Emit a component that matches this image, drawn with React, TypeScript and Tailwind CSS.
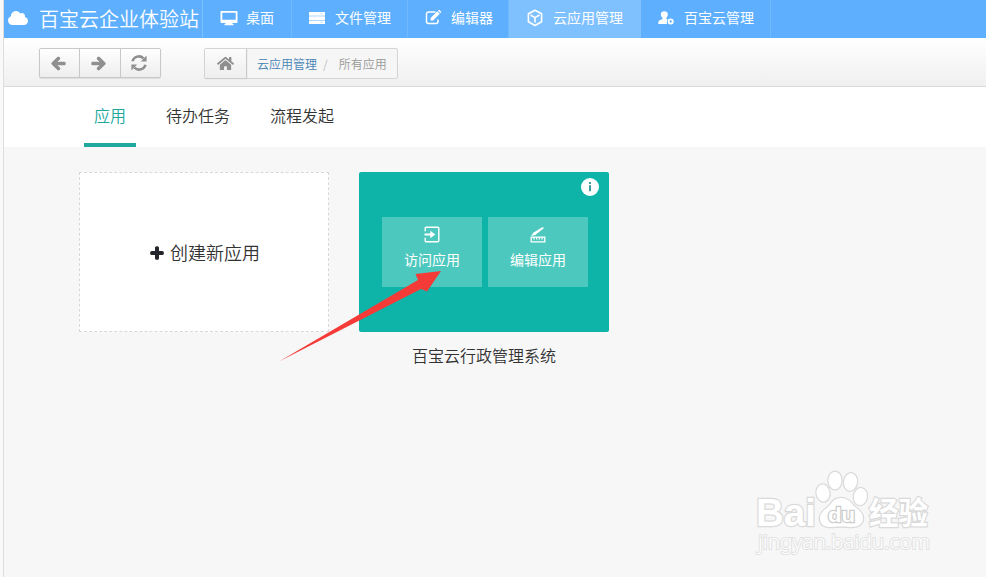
import type { ReactNode } from 'react';
import { FaArrowLeft, FaArrowRight, FaCloud, FaHome, FaPlus } from 'react-icons/fa';

interface NavItem {
  label: string;
  icon: ReactNode;
  cls: string;
  active?: boolean;
}

function DesktopIcon() {
  return (
    <svg width="18" height="16" viewBox="0 0 18 16" fill="currentColor">
      <path fillRule="evenodd" d="M1.5 1h15a1 1 0 0 1 1 1v10a1 1 0 0 1-1 1h-4v1h1v1.2h-9V14h1v-1h-4a1 1 0 0 1-1-1V2a1 1 0 0 1 1-1zM2.3 2.8v7h13.4v-7z" />
    </svg>
  );
}

function FilesIcon() {
  return (
    <svg width="16" height="14" viewBox="0 0 16 14">
      <g fill="currentColor">
        <rect y="1" width="16" height="3.7" rx=".5" />
        <rect y="5.2" width="16" height="3.7" rx=".5" />
        <rect y="9.4" width="16" height="3.7" rx=".5" />
      </g>
      <path d="M11 2.8h3M5 7h1M11 11.2h3" stroke="#b5dcff" strokeWidth=".6" />
    </svg>
  );
}

function EditIcon() {
  return (
    <svg width="17" height="15" viewBox="0 0 17 15">
      <path d="M10.500 2H3.500a2 2 0 0 0-2 2v7.500a2 2 0 0 0 2 2H11a2 2 0 0 0 2-2V9.500" fill="none" stroke="currentColor" strokeWidth="1.500" />
      <path d="M5.600 7.900 12.300 1.200 14.800 3.700 8.100 10.400H5.600zM12.900.600l.6-.5q.5-.3 1 0l1.500 1.500q.3.500 0 1l-.6.500z" fill="currentColor" />
    </svg>
  );
}

function CubeIcon() {
  return (
    <svg width="16" height="18" viewBox="0 0 16 18" fill="none" stroke="currentColor" strokeWidth="1.6" strokeLinejoin="round">
      <path d="M8 1.3 14.6 4.8v8L8 16.5 1.4 12.8v-8z" />
      <path d="M3.5 6 8 8.6 12.5 6M8 8.6v5" />
    </svg>
  );
}

function UserCogIcon() {
  return (
    <svg width="16" height="14" viewBox="0 0 16 14" fill="currentColor">
      <path d="M2.8 3.6C2.8 1.4 4.3.3 6.3.3s3.500 1.100 3.500 3.300c0 1.600-.8 2.600-1.500 3.300v.900l1.400.700c-.900.800-1.100 2.700-.7 4.400H.3c0-2.800.4-3.400 1.900-4l2.400-1V7C3.600 6.300 2.800 5.200 2.800 3.600z" />
      <circle cx="12.700" cy="10.500" r="2.100" fill="none" stroke="currentColor" strokeWidth="1.900" />
    </svg>
  );
}

function RefreshIcon() {
  return (
    <svg width="18" height="18" viewBox="0 0 18 18">
      <path d="M2.5 7.3A6.6 6.600 0 0 1 13.5 4.300M15.500 10.700A6.600 6.600 0 0 1 4.500 13.700" fill="none" stroke="currentColor" strokeWidth="2.500" />
      <path d="M16.600 1.600v5.800h-5.800zM1.400 16.400v-5.800h5.800z" fill="currentColor" />
    </svg>
  );
}

function EnterIcon() {
  return (
    <svg width="16" height="18" viewBox="0 0 16 18">
      <path d="M1.200 5.200V2.200a1 1 0 0 1 1-1h11.600a1 1 0 0 1 1 1v12.600a1 1 0 0 1-1 1H2.200a1 1 0 0 1-1-1v-3" fill="none" stroke="currentColor" strokeWidth="1.400" />
      <path d="M.5 7.400h5.800V4.800l5 3.700-5 3.700V9.600H.5z" fill="currentColor" />
    </svg>
  );
}

function DesignIcon() {
  return (
    <svg width="16" height="18" viewBox="0 0 16 18">
      <path d="M1.200 10 3.200 6.800 12.300 1.300q1.500-.3 1.500 1L5.300 9z" fill="currentColor" />
      <path d="M1.200 11.200h13.600v4.600H1.200zM4 11.500v2M6.700 11.500v2M9.400 11.500v2M12.100 11.500v2" fill="none" stroke="currentColor" strokeWidth="1.300" />
    </svg>
  );
}

const nav: NavItem[] = [
  { label: '桌面', icon: <DesktopIcon />, cls: 'w-[89px] pl-[17px]' },
  { label: '文件管理', icon: <FilesIcon />, cls: 'w-[116px] pl-[17px]' },
  { label: '编辑器', icon: <EditIcon />, cls: 'w-[101px] pl-[17px]' },
  { label: '云应用管理', icon: <CubeIcon />, cls: 'w-[132px] pl-[18px]', active: true },
  { label: '百宝云管理', icon: <UserCogIcon />, cls: 'w-[130px] pl-[17px]' },
];

const tabs = ['应用', '待办任务', '流程发起'];

function Header() {
  return (
    <header className="flex h-[38px] bg-[#5eb0ff] text-white">
      <div className="flex w-[199px] items-center gap-[11px] border-r border-[#7abfff] pb-0.5 pl-1">
        <FaCloud size={20} className="shrink-0" />
        <h1 className="whitespace-nowrap pt-px text-[20px] font-[350] leading-[36px]">百宝云企业体验站</h1>
      </div>
      {nav.map((n) => (
        <a
          key={n.label}
          className={`flex shrink-0 items-center border-r pb-[3px] font-normal ${n.cls} ${n.active ? 'border-[#7fc0ff] bg-[#7fc0ff]' : 'border-[#6fb9ff]'}`}
        >
          <span className="flex w-[26px] shrink-0 items-center">{n.icon}</span>
          <span className="whitespace-nowrap text-[14px]">{n.label}</span>
        </a>
      ))}
    </header>
  );
}

function Toolbar() {
  const btn = 'flex h-full items-center justify-center border-r border-[#c8c8c8]';
  return (
    <div className="flex h-[49px] border-b border-[#d8d8d8] bg-gradient-to-b from-white to-[#f0f0f0] pl-[35px] pt-[10px] text-[#8f8f8f]">
      <div className="flex h-[30px] w-[122px] rounded-[2px] border border-[#c8c8c8] bg-gradient-to-b from-white to-[#eee] shadow-[0_1px_1px_#ddd]">
        <button className={`${btn} w-10 pr-0.5`}><FaArrowLeft size={15} strokeWidth={40} className="overflow-visible" /></button>
        <button className={`${btn} w-[41px] pr-1`}><FaArrowRight size={15} strokeWidth={40} className="overflow-visible" /></button>
        <button className="flex flex-1 items-center justify-center pr-1"><RefreshIcon /></button>
      </div>
      <nav className="ml-[43px] flex h-[31px] w-[194px] items-center rounded-[2px] border border-[#d4d4d4] bg-[#f6f6f6] text-[12px]">
        <span className={`${btn} w-[42px] bg-gradient-to-b from-[#fcfcfc] to-[#eee] shadow-[0_1px_1px_#ccc]`}><FaHome size={17} /></span>
        <a className="ml-[10px] text-[#4582b4]">云应用管理</a>
        <span className="ml-1.5 text-[#bbb]">/</span>
        <span className="ml-[11px] text-[#999]">所有应用</span>
      </nav>
    </div>
  );
}

function AppAction({ icon, label }: { icon: ReactNode; label: string }) {
  return (
    <button className="flex h-[70px] w-[100px] flex-col items-center bg-[#4dc8be] pt-[9px] text-white">
      {icon}
      <span className="mt-[5px] text-[14px] font-normal leading-[21px]">{label}</span>
    </button>
  );
}

function Watermark() {
  return (
    <svg className="absolute left-[747px] top-[465px]" width="190" height="95" fill="#fff" stroke="#dadada" strokeWidth="2.500" style={{ paintOrder: 'stroke' }}>
      <text x="6" y="61" fontSize="39" fontWeight="700" textLength="60" lengthAdjust="spacingAndGlyphs" fontFamily="Liberation Sans, sans-serif">Bai</text>
      <ellipse cx="73" cy="28" rx="6.500" ry="8.500" transform="rotate(-8 73 28)" />
      <ellipse cx="85" cy="15.500" rx="6.500" ry="8.800" />
      <ellipse cx="100.500" cy="17" rx="6.500" ry="8.800" transform="rotate(8 101 17)" />
      <ellipse cx="110.500" cy="31.500" rx="6.500" ry="8.500" transform="rotate(8 110 31)" />
      <path d="M91 33c-6 0-8 3-11 7-4 4-10 7-10 13 0 7 5 9 10 9 4 0 7-.500 11-.500s7 .500 11 .500c6 0 11-3 11-9 0-6-6-9-10-13-3-4-6-7-12-7z" />
      <text x="78" y="57" fontSize="21" fontWeight="700" textLength="27" lengthAdjust="spacingAndGlyphs" stroke="#cdcdcd" fontFamily="Liberation Sans, sans-serif">du</text>
      <text x="119" y="59" fontSize="31" fontWeight="700" textLength="59" lengthAdjust="spacingAndGlyphs" fontFamily="Noto Sans CJK SC, sans-serif">经验</text>
      <text x="8" y="84" fontSize="20" textLength="172" lengthAdjust="spacingAndGlyphs" stroke="#e2e2e2" strokeWidth="2" fontFamily="Noto Sans, sans-serif">jingyan.baidu.com</text>
    </svg>
  );
}

export default function App() {
  return (
    <div className="relative h-[577px] w-[986px] overflow-hidden border-l-[3px] border-[#f9f9f9] bg-[#f7f7f7] font-['Noto_Sans_CJK_SC',sans-serif] font-[350] text-[#333]">
      <div className="h-full border-l border-[#ddd]">
        <Header />
        <Toolbar />
        <div className="flex h-[60px] bg-white pl-20">
          {tabs.map((t, i) => (
            <a
              key={t}
              className={`mr-5 h-full border-b-4 px-[10px] pt-4 text-[16px] leading-6 ${i === 0 ? 'border-[#20a89e] text-[#20a89e]' : 'border-transparent'}`}
            >
              {t}
            </a>
          ))}
        </div>
        <main className="flex gap-[30px] pl-[75px] pt-[25px]">
          <button className="flex h-[160px] w-[250px] items-center justify-center gap-1.5 border border-dashed border-[#d8d8d8] bg-white pl-0.5 text-[18px]">
            <FaPlus size={14} strokeWidth={50} className="mt-0.5 overflow-visible text-[#25252d]" />
            创建新应用
          </button>
          <div className="w-[250px]">
            <div className="relative flex h-[160px] justify-center gap-1.5 rounded-[2px] bg-[#0fb4a9] pl-[2px] pt-[45px]">
              <AppAction icon={<EnterIcon />} label="访问应用" />
              <AppAction icon={<DesignIcon />} label="编辑应用" />
              <svg className="absolute right-[10px] top-[6px]" width="18" height="18" viewBox="0 0 18 18">
                <circle cx="9" cy="9" r="9" fill="#fff" />
                <path d="M9 4v2M9 7.300v6" stroke="#2d8f91" strokeWidth="1.800" />
              </svg>
            </div>
            <p className="mt-[11px] text-center text-[16px] leading-6">百宝云行政管理系统</p>
          </div>
        </main>
      </div>
      {/* pointer to the open-app button */}
      <svg className="absolute left-[270px] top-[265px]" width="172" height="100">
        <path d="M6 96.500 145 15 142.500 9 168 6 154 26.500 148 24z" fill="#f43b38" />
      </svg>
      <Watermark />
    </div>
  );
}
